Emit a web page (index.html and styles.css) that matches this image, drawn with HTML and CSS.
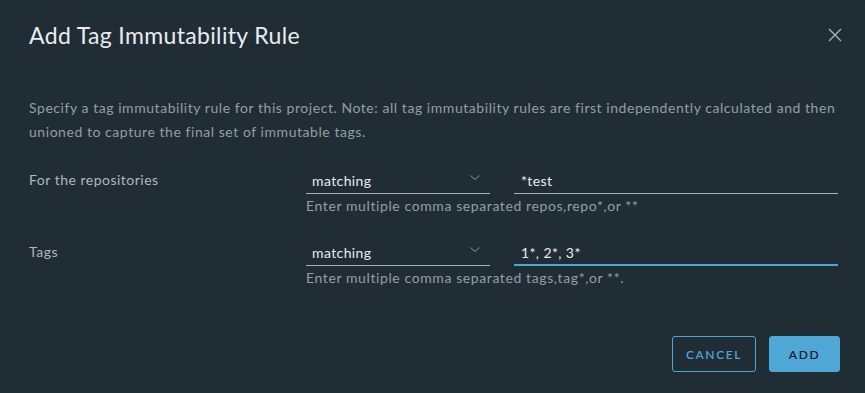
FILE: index.html
```html
<!DOCTYPE html>
<html lang="en">
<head>
  <meta charset="UTF-8">
  <title>Add Tag Immutability Rule</title>
  <link rel="stylesheet" href="styles.css">
</head>
<body>
  <div class="modal">
    <div class="modal-header">
      <h3 class="modal-title">Add Tag Immutability Rule</h3>
      <button class="close" aria-label="Close">
        <svg width="16" height="16" viewBox="0 0 16 16">
          <path d="M2 2 L14 14 M14 2 L2 14" stroke="#a9b6be" stroke-width="1.3" fill="none"/>
        </svg>
      </button>
    </div>

    <div class="modal-body">
      <p class="desc">Specify a tag immutability rule for this project. Note: all tag immutability rules are first independently calculated and then unioned to capture the final set of immutable tags.</p>

      <div class="form-row">
        <label class="form-label">For the repositories</label>
        <div class="fields">
          <div class="select">
            <span>matching</span>
            <svg class="chev" width="12" height="8" viewBox="0 0 12 8"><path d="M1.5 1.5 L6 5.5 L10.5 1.5" stroke="#8b979e" stroke-width="1" fill="none"/></svg>
          </div>
          <div class="input">*test</div>
          <div class="helper">Enter multiple comma separated repos,repo*,or **</div>
        </div>
      </div>

      <div class="form-row">
        <label class="form-label">Tags</label>
        <div class="fields">
          <div class="select">
            <span>matching</span>
            <svg class="chev" width="12" height="8" viewBox="0 0 12 8"><path d="M1.5 1.5 L6 5.5 L10.5 1.5" stroke="#8b979e" stroke-width="1" fill="none"/></svg>
          </div>
          <div class="input focused">1*, 2*, 3*</div>
          <div class="helper">Enter multiple comma separated tags,tag*,or **.</div>
        </div>
      </div>
    </div>

    <div class="modal-footer">
      <button class="btn btn-outline">CANCEL</button>
      <button class="btn btn-primary">ADD</button>
    </div>
  </div>
</body>
</html>
```

FILE: styles.css
```css
body {
  margin: 0;
  padding: 0;
  background-color: #1b2a32;
  font-family: Lato, "Open Sans", sans-serif;
}

.modal {
  width: 864px;
  height: 393px;
  margin-left: 1px;
  background-color: #212d34;
  border-top-right-radius: 3px;
  box-sizing: border-box;
  padding: 0 27px 0 28px;
}

.modal-header {
  display: flex;
  align-items: center;
  justify-content: space-between;
  height: 70px;
}

.modal-title {
  margin: 0;
  font-size: 23px;
  font-weight: 400;
  color: #e9ecef;
  letter-spacing: 0.35px;
}

.close {
  background: transparent;
  border: none;
  padding: 0;
  margin-right: -5px;
  margin-top: 0;
  cursor: pointer;
  display: flex;
}

.modal-body {
  padding-top: 26px;
}

.desc {
  margin: 0;
  font-size: 14px;
  line-height: 24px;
  color: #939ea5;
  letter-spacing: 0.55px;
}

.form-row {
  display: flex;
  margin-top: 24px;
}

.form-row + .form-row {
  margin-top: 26px;
}

.form-label {
  width: 277px;
  flex-shrink: 0;
  font-size: 14px;
  color: #adb8be;
  letter-spacing: 0.5px;
  padding-top: 3px;
}

.fields {
  display: grid;
  grid-template-columns: 184px 324px;
  column-gap: 24px;
}

.select {
  display: flex;
  align-items: center;
  justify-content: space-between;
  height: 25px;
  padding: 0 9px 0 6px;
  border-bottom: 1px solid #a5aeb3;
  font-size: 14px;
  color: #e9ecef;
  letter-spacing: 0.4px;
}

.chev {
  margin-top: -6px;
}

.input {
  height: 25px;
  line-height: 25px;
  padding-left: 7px;
  border-bottom: 1px solid #a5aeb3;
  font-size: 14px;
  color: #e9ecef;
  letter-spacing: 0.4px;
}

.input.focused {
  border-bottom: 2px solid #4aa8d8;
  height: 24px;
}

.helper {
  grid-column: 1 / 3;
  font-size: 14px;
  color: #939ea5;
  letter-spacing: 0.6px;
  margin-top: 3px;
}

.modal-footer {
  display: flex;
  justify-content: flex-end;
  gap: 13px;
  margin-top: 50px;
  margin-right: -2px;
}

.btn {
  height: 36px;
  padding: 0 8px;
  border-radius: 3px;
  font-family: Lato, "Open Sans", sans-serif;
  font-size: 12px;
  font-weight: 600;
  letter-spacing: 1.6px;
  cursor: pointer;
}

.btn-outline {
  width: 84px;
  background: transparent;
  border: 1px solid #4aa8d8;
  color: #4aa8d8;
}

.btn-primary {
  width: 71px;
  background-color: #4fa7d6;
  border: 1px solid #4fa7d6;
  color: #13212a;
}
```
